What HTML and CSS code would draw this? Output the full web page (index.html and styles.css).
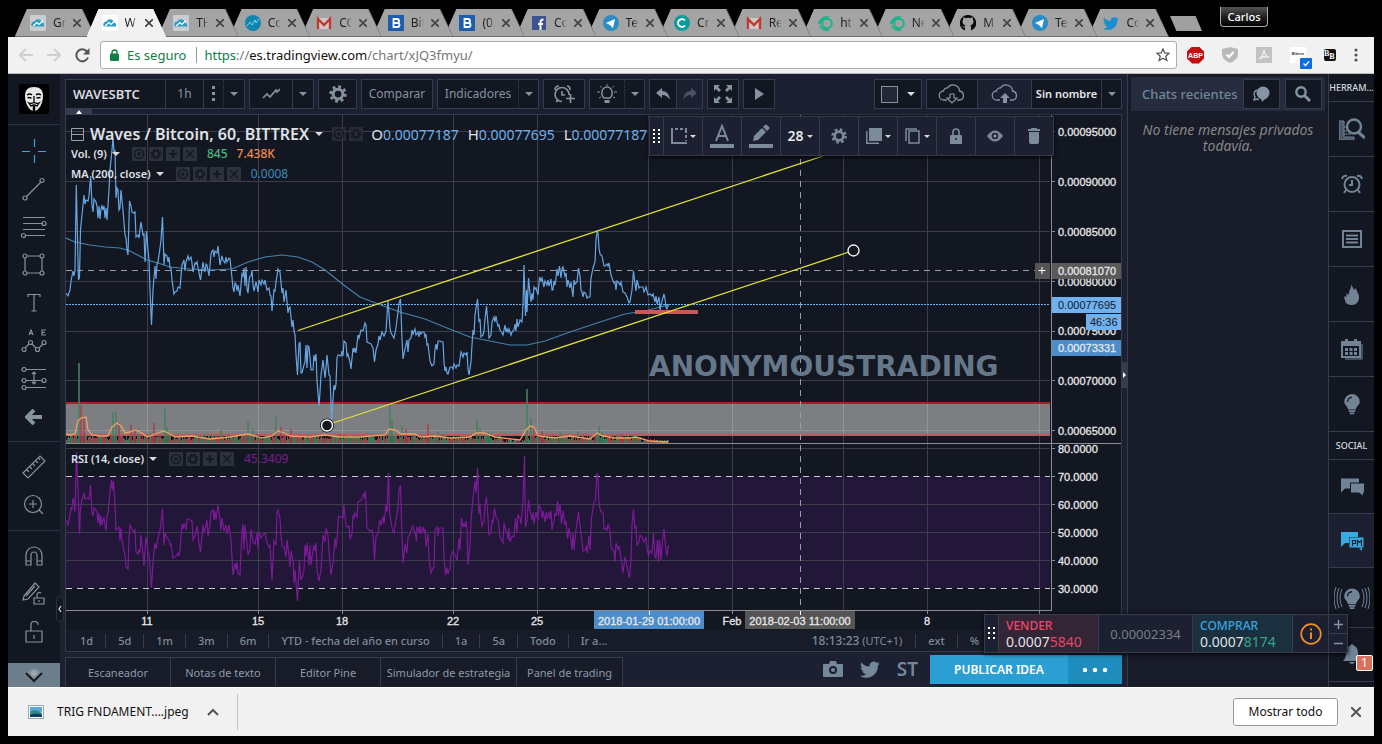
FILE: index.html
```html
<!DOCTYPE html>
<html lang="es">
<head>
<meta charset="utf-8">
<title>WAVESBTC - TradingView</title>
<link rel="stylesheet" href="styles.css">
</head>
<body>
<svg class="defs" aria-hidden="true">
  <symbol id="tv" viewBox="0 0 16 16"><rect width="16" height="16" rx="1" fill="currentColor"/><path d="M2 11.500h12a3 3 0 0 0-2-4 4 4 0 0 0-7.500-1 3 3 0 0 0-2.500 5z" fill="#2f9bc6"/><path d="M3 11l4-3.500 2 2 4-4" fill="none" stroke="#fff" stroke-width="1.200"/></symbol>
  <symbol id="cmc" viewBox="0 0 16 16"><circle cx="8" cy="8" r="8" fill="#0f85b0"/><path d="M2 11l3-4 2 3 3-5 1 3 3-4" fill="none" stroke="#7fd0ee"/></symbol>
  <symbol id="gmail" viewBox="0 0 16 16"><path d="M1 3h14v11H1z" fill="#d0c8c8"/><path d="M2 14V4l6 6 6-6v10" fill="none" stroke="#c03a30" stroke-width="2.400"/></symbol>
  <symbol id="btx" viewBox="0 0 16 16"><rect width="16" height="16" fill="#1c5dad"/><path d="M5.500 4h3.500a2 2 0 0 1 0 4h-3.500zM5.500 8h4a2 2 0 0 1 0 4h-4z" fill="none" stroke="#fff" stroke-width="1.800"/></symbol>
  <symbol id="fb" viewBox="0 0 16 16"><rect x="1" y="1" width="14" height="14" fill="#3b5490"/><path d="M9.500 15V7q0-2.500 3-2.500M7 9h5" fill="none" stroke="#fff" stroke-width="2"/></symbol>
  <symbol id="tg" viewBox="0 0 16 16"><circle cx="8" cy="8" r="8" fill="#2a8cc4"/><path d="M3 8l9-4-2 9-3-3z" fill="#fff"/></symbol>
  <symbol id="cc" viewBox="0 0 16 16"><circle cx="8" cy="8" r="8" fill="#0d9b9b"/><path d="M11 5.500a4 3.800 0 1 0 0 5" fill="none" stroke="#fff" stroke-width="1.800"/></symbol>
  <symbol id="st" viewBox="0 0 16 16"><path d="M1 7q4-7 12-6-3 1-3 3-5 0-7 6-2-1-2-3z" fill="#16b58a"/><path d="M3 11q3 5 9 4" fill="none" stroke="#16b58a" stroke-width="1.500"/><circle cx="10" cy="8.500" r="4.800" fill="none" stroke="#16b58a" stroke-width="2"/></symbol>
  <symbol id="gh" viewBox="0 0 16 16"><path d="M8 0a8 8 0 0 0-3 15.500v-3c-2 .4-2.500-1-3-1.700 1.300-.2 1.500 1.200 3 .7 0-.6.200-1 .5-1.200C3.500 10 2.500 8.500 2.500 6.500c0-1 .3-1.600.8-2.200 0-.6-.1-1.300.2-2 .8 0 1.500.4 2.200.9a8 8 0 0 1 4.600 0c.7-.5 1.400-.9 2.200-.9.3.7.2 1.400.2 2 .5.600.8 1.200.8 2.200 0 2-1 3.500-3 3.800.4.400.5.900.5 1.700v3.500A8 8 0 0 0 8 0z" fill="#0a0a0a"/></symbol>
  <symbol id="tw" viewBox="0 0 16 16"><path d="M16 3.500l-1.700.5.9-1.600-1.900.7A3.300 3.300 0 0 0 7.700 6 9 9 0 0 1 1.100 2.700a3.300 3.300 0 0 0 1 4.300L.7 6.600a3.300 3.300 0 0 0 2.600 3.200H1.800a3.300 3.300 0 0 0 3 2.300A6.500 6.500 0 0 1 0 13.500 9.300 9.300 0 0 0 14.300 5.200z" fill="currentColor"/></symbol>
  <symbol id="caret" viewBox="0 0 8 4"><path d="M0 0h8L4 4z" fill="currentColor"/></symbol>
  <symbol id="eye" viewBox="0 0 14 14"><rect width="14" height="14" fill="#2c313d"/><circle cx="7" cy="7" r="4.500" fill="none" stroke="#151922" stroke-width="1.600"/><circle cx="7" cy="7" r="1.700" fill="#151922"/></symbol>
  <symbol id="cog" viewBox="0 0 24 24"><circle cx="12" cy="12" r="6.500" fill="none" stroke="currentColor" stroke-width="4"/><circle cx="12" cy="12" r="9.800" fill="none" stroke="currentColor" stroke-width="3.600" stroke-dasharray="3.850 3.850"/></symbol>
  <symbol id="scog" viewBox="0 0 14 14"><rect width="14" height="14" fill="#2c313d"/><circle cx="7" cy="7" r="3.200" fill="none" stroke="#151922" stroke-width="2"/><circle cx="7" cy="7" r="4.800" fill="none" stroke="#151922" stroke-width="1.500" stroke-dasharray="1.880 1.880"/></symbol>
  <symbol id="plus" viewBox="0 0 14 14"><rect width="14" height="14" fill="#2c313d"/><path d="M7 3v8M3 7h8" stroke="#151922" stroke-width="2.200"/></symbol>
  <symbol id="x" viewBox="0 0 14 14"><rect width="14" height="14" fill="#2c313d"/><path d="M3 3l8 8M11 3l-8 8" stroke="#151922" stroke-width="1.600"/></symbol>
  <symbol id="clock" viewBox="0 0 22 20"><circle cx="11" cy="10.500" r="7.500" fill="none" stroke="currentColor" stroke-width="2"/><path d="M11 6v5H8M5 16l-2 3M17 16l2 3M1 5q1-4 5-3M21 5q-1-4-5-3" fill="none" stroke="currentColor" stroke-width="2"/></symbol>
  <symbol id="bulb" viewBox="0 0 16 20"><path d="M8 1a7 7 0 0 0-7 7c0 3 3 4 3.500 7h7C12 12 15 11 15 8a7 7 0 0 0-7-7z" fill="currentColor"/><path d="M4 8a4 4 0 0 1 4-4" fill="none" stroke="#131722" stroke-width="1.300"/><path d="M5 16.500h6M6 18.500h4" stroke="currentColor" stroke-width="1.500"/></symbol>
  <symbol id="cloud" viewBox="0 0 28 20"><path d="M9 16H6a4.500 4.500 0 0 1-.5-9 3.500 3.500 0 0 1 4-3A6.500 6.500 0 0 1 21.500 7 4.600 4.600 0 0 1 22 16h-3" fill="none" stroke="currentColor" stroke-width="1.300"/></symbol>
  <symbol id="chat" viewBox="0 0 24 18"><path d="M1 1h18v4h-9v6H5l-4 4z" fill="currentColor"/><path d="M11 6h13v9h-1v3l-4-3h-8z" fill="currentColor"/></symbol>
</svg>

<div class="tabs">
  <nav class="tablist" id="tablist"></nav>
  <button class="newtab" aria-label="Nueva pestaña"></button>
  <button class="user">Carlos</button>
</div>

<header class="omni">
  <button class="nav" aria-label="Atrás"><svg width="14" height="14"><path d="M14 7H1M7 1L1 7l6 6" fill="none" stroke="#d0d0d0" stroke-width="2"/></svg></button>
  <button class="nav" aria-label="Adelante"><svg width="14" height="14"><path d="M0 7h13M7 1l6 6-6 6" fill="none" stroke="#d0d0d0" stroke-width="2"/></svg></button>
  <button class="nav" aria-label="Recargar"><svg width="15" height="15"><path d="M13 9.500A6 6 0 1 1 12 3.500" fill="none" stroke="#555" stroke-width="2"/><path d="M14.500 0v6.500H8z" fill="#555"/></svg></button>
  <div class="url" role="textbox" aria-label="Dirección">
    <svg width="9" height="12"><path d="M2 5V3.500a2.500 2.500 0 0 1 5 0V5" fill="none" stroke="#0b8043" stroke-width="1.400"/><rect y="4.500" width="9" height="7.500" rx="1" fill="#0b8043"/></svg>
    <span class="secure">Es seguro</span>
    <span class="addr"><b>https</b><i>://</i>es.tradingview.com<i>/chart/xJQ3fmyu/</i></span>
    <svg class="star" width="14" height="14" viewBox="0 0 14 14"><path d="M7 1l1.800 4 4.200.4-3.200 2.900 1 4.200L7 10.300l-3.800 2.200 1-4.200L1 5.400 5.200 5z" fill="none" stroke="#555" stroke-width="1.300"/></svg>
  </div>
  <div class="ext">
    <span class="abp">ABP</span>
    <svg width="16" height="16" viewBox="0 0 16 16"><path d="M8 0l8 2v5q0 6-8 9-8-3-8-9V2z" fill="#b9b9b9"/><path d="M4.500 7.500L7 10l4.500-5" fill="none" stroke="#fff" stroke-width="2"/></svg>
    <svg width="16" height="16" viewBox="0 0 16 16"><rect width="16" height="16" fill="#c3c3c3"/><path d="M3 12q4-2 5-9 1 7 5 7-6-1-10 2z" fill="none" stroke="#f2f2f2" stroke-width="1.300"/></svg>
    <span class="bit">Bittrex<svg width="12" height="11"><rect width="12" height="11" rx="1" fill="#0b6ee0"/><path d="M3.500 5.500l2 2 3.500-4" fill="none" stroke="#fff" stroke-width="1.300"/></svg></span>
    <span class="bb"><b>B</b><b>B</b></span>
    <svg width="4" height="14" fill="#555"><circle cx="2" cy="2" r="1.600"/><circle cx="2" cy="7" r="1.600"/><circle cx="2" cy="12" r="1.600"/></svg>
  </div>
</header>

<main class="app">
  <aside class="tools">
    <svg class="mask" width="30" height="30" viewBox="0 0 30 30"><rect width="30" height="30" rx="2" fill="#000"/><path d="M15 3c6 0 9 3 9 9 0 7-4 15-9 15S6 19 6 12c0-6 3-9 9-9z" fill="#e8e8e8"/><path d="M8 11q3-2 5 0M17 11q2-2 5 0M8.500 13.500l4 .5M17.500 14l4-.5M15 12v6M10 19q2 1 5-.5 3 1.500 5 .5l-2 3q-3-2-6 0z" fill="none" stroke="#000" stroke-width="1.300"/><path d="M15 22v5" stroke="#000" stroke-width="2.500"/></svg>
    <div class="group g1">
      <button aria-label="Cruz"><svg class="cross" width="24" height="24"><path d="M12.500 0v8M12.500 16v8M0 12.500h8M16 12.500h8"/></svg></button>
      <button aria-label="Línea de tendencia"><svg width="24" height="24"><path d="M4 20L19 5"/><circle cx="3" cy="21" r="2"/><circle cx="20" cy="3.500" r="2"/></svg></button>
      <button aria-label="Fibonacci"><svg width="26" height="24"><path d="M2 2.500h22M2 8.500h20M2 14.500h22M4 20.500h20"/><circle cx="23" cy="8.500" r="2"/><circle cx="2.500" cy="20.500" r="2"/></svg></button>
      <button aria-label="Rectángulo"><svg width="24" height="24"><path d="M5 3h13M5 20h13M3 5v13M20 5v13"/><circle cx="3" cy="3" r="2"/><circle cx="20" cy="3" r="2"/><circle cx="3" cy="20" r="2"/><circle cx="20" cy="20" r="2"/></svg></button>
      <button aria-label="Texto"><svg width="16" height="20"><path d="M2 4V1.500h12V4M8 2v16M5.500 18h5"/></svg></button>
      <button aria-label="Patrón"><svg width="26" height="24"><path d="M4 19l4-4M11 15l4 4M18 19l4-4M8 6l2-5 2 5M8.500 4.500h3M25 1h-4v5h4M21 3.500h3"/><circle cx="3" cy="20.500" r="2"/><circle cx="9.500" cy="13.500" r="2"/><circle cx="16.500" cy="20.500" r="2"/><circle cx="23" cy="13.500" r="2"/></svg></button>
      <button aria-label="Predicción"><svg width="26" height="24"><path d="M5 2.500h20M5 13.500h16M5 20.500h20M13 5v12M11 7l2-2 2 2M11 15l2 2 2-2"/><circle cx="3" cy="2.500" r="2"/><circle cx="3" cy="13.500" r="2"/><circle cx="23" cy="13.500" r="2"/><circle cx="3" cy="20.500" r="2"/></svg></button>
      <button aria-label="Atrás"><svg class="bold" width="18" height="16"><path d="M17 8H3M9 1L2 8l7 7"/></svg></button>
    </div>
    <div class="group g2">
      <button aria-label="Medir"><svg width="24" height="24"><path d="M1 18L18 1l5 5L6 23zM5 15l2 2M8 12l2 2M11 9l2 2M14 6l2 2M17 3l1 2"/></svg></button>
      <button aria-label="Ampliar"><svg width="22" height="22"><circle cx="10" cy="10" r="8.500"/><path d="M10 6v8M6 10h8M16 16l4 4"/></svg></button>
    </div>
    <div class="group g3">
      <button aria-label="Imán"><svg width="18" height="20"><path d="M1 19V9a8 8 0 0 1 16 0v10h-5V9a3 3 0 0 0-6 0v10zM1 15h5M12 15h5"/></svg></button>
      <button aria-label="Bloquear dibujo"><svg width="24" height="24"><path d="M2 14L13 1l4 4L6 17l-5 1zM4 14l9-10M12 16h10v6H12zM15 16v-3a2.500 2.500 0 0 1 4-2M17 18v2"/></svg></button>
      <button aria-label="Bloquear"><svg width="18" height="22"><path d="M1 10h16v11H1zM6 10V4a3.500 3.500 0 0 1 7 0M9 14v4"/></svg></button>
    </div>
    <button class="more" aria-label="Más"><svg width="20" height="16"><path d="M2 6q8-9 16 0l-8 7z" stroke="none" fill="#7f8d99"/><circle cx="10" cy="6" r="3" stroke="none" fill="#9aa6b0"/><path class="chev" d="M2 6l8 8 8-8"/></svg></button>
    <button class="handle" aria-label="Contraer"><svg width="4" height="8"><path d="M3 1L1 4l2 3"/></svg></button>
  </aside>

  <section class="center">
    <div class="bar">
      <div class="btns"><input class="symbol" aria-label="Símbolo" value="WAVESBTC"><button class="w38">1h</button><button class="w20"><svg width="4" height="16"><path d="M0 0h3v3H0zM0 6h3v3H0zM0 12h3v3H0z" fill="currentColor"/></svg></button><button class="w21 dot"><svg width="8" height="4"><use href="#caret"/></svg></button></div>
      <div class="btns"><button class="w42"><svg width="18" height="12"><path d="M1 10l4-4 3 3 6-7 1 2 3-3" fill="none" stroke="currentColor" stroke-width="1.700"/></svg></button><button class="w21"><svg width="8" height="4"><use href="#caret"/></svg></button></div>
      <div class="btns"><button class="w37"><svg width="18" height="18"><use href="#cog"/></svg></button></div>
      <div class="btns"><button class="w70">Comparar</button></div>
      <div class="btns"><button class="w80">Indicadores</button><button class="w20 dot"><svg width="8" height="4"><use href="#caret"/></svg></button></div>
      <div class="btns"><button class="w40"><svg width="22" height="20" viewBox="0 0 22 20"><path d="M9 17.500A7 7 0 1 1 16 11M9 7v4h3M2 6q0-4 4-4M14 2q3 0 3 4M5 16l-2 2M13 14.500h9M17.500 10v9" fill="none" stroke="currentColor" stroke-width="1.700"/></svg></button></div>
      <div class="btns"><button class="w34"><svg width="20" height="20" viewBox="0 0 20 20"><path d="M7 14q-3-3-2-6a5 5 0 0 1 10 0q1 3-2 6z" fill="none" stroke="currentColor" stroke-width="1.400"/><path d="M7.500 16h5v3h-5z" fill="currentColor"/><path d="M10 0v2M3 2l1.500 1.500M17 2l-1.500 1.500M0 8h3M17 8h3M2 14l2-1M18 14l-2-1" stroke="currentColor"/></svg></button><button class="w20 dot"><svg width="8" height="4"><use href="#caret"/></svg></button></div>
      <div class="btns"><button class="w26"><svg width="14" height="12"><path d="M0 5l6-5v3q7 0 8 9-3-5-8-5v3z" fill="currentColor"/></svg></button><button class="w26 off"><svg width="14" height="12"><path d="M14 5L8 0v3Q1 3 0 12q3-5 8-5v3z" fill="currentColor"/></svg></button></div>
      <div class="btns"><button class="w30"><svg width="18" height="18"><path d="M0 0h6L4 2l3 3-2 2-3-3-2 2zM18 0h-6l2 2-3 3 2 2 3-3 2 2zM18 18h-6l2-2-3-3 2-2 3 3 2-2zM0 18h6l-2-2 3-3-2-2-3 3-2-2z" fill="currentColor"/></svg></button></div>
      <div class="btns"><button class="w30"><svg width="9" height="12"><path d="M0 0l9 6-9 6z" fill="currentColor"/></svg></button></div>
      <div class="btns right"><button class="w46"><svg width="17" height="17"><rect x=".5" y=".5" width="16" height="16" fill="#232835" stroke="currentColor"/></svg><svg class="lite" width="8" height="4"><use href="#caret"/></svg></button></div>
      <div class="btns gap"><button class="w50"><svg width="28" height="20" viewBox="0 0 28 20"><use href="#cloud"/><path d="M12 10h4v4h3l-5 5-5-5h3z" fill="none" stroke="currentColor" stroke-width="1.200"/></svg></button><button class="w54 hi"><svg width="28" height="20" viewBox="0 0 28 20"><use href="#cloud"/><path d="M12 19h4v-5h3l-5-5-5 5h3z" fill="currentColor"/></svg></button><button class="w70 name">Sin nombre</button><button class="w20"><svg width="8" height="4"><use href="#caret"/></svg></button></div>
      <span class="tri" aria-hidden="true"><svg width="6" height="4"><path d="M0 4l3-4 3 4z" fill="#fff"/></svg></span>
    </div>

    <div class="chartbox">
      <svg class="chart" viewBox="66 115 1055 515" role="img" aria-label="Waves / Bitcoin">
        <g id="grid" shape-rendering="crispEdges">
          <rect x="66" y="476" width="984" height="112" fill="#221639"/>
          <path d="M66 131.500H1050M66 181.500H1050M66 231.500H1050M66 281.500H1050M66 331.500H1050M66 380.500H1050M66 430.500H1050M66 448.500H1050M66 504.500H1050M66 532.500H1050M66 560.500H1050M147.500 115V610M258.500 115V610M342.500 115V610M453.500 115V610M537.500 115V610M648.500 115V610M732.500 115V610M843.500 115V610M927.500 115V610M1039.500 115V610" stroke="#3b3d4b"/>
          <rect x="66" y="404" width="984" height="32" fill="#7d7e81"/>
          <path d="M147.500 404V435M258.500 404V435M342.500 404V435M453.500 404V435M537.500 404V435M648.500 404V435M732.500 404V435M843.500 404V435M927.500 404V435M1039.500 404V435M66 430.500H1050" stroke="#929396"/>
          <rect x="66" y="402" width="984" height="2" fill="#a8202a"/>
          <rect x="66" y="434" width="984" height="2" fill="#bb5a5c"/>
        </g>
        <g id="bars" shape-rendering="crispEdges"></g>
        <polyline fill="none" stroke="#f0a060" stroke-width="1.300" points="66,434 70,435 75,434 78,421 81,418 86,417 88,430 92,435 100,436 108,436 112,427 117,423 121,426 125,433 130,432 135,430 142,433 147,437 158,433 164,431 170,434 175,437 192,436 210,439 230,437 248,434 262,438 272,436 278,431 284,433 290,436 310,437 325,435 340,437 360,437 385,435 389,429 395,430 401,434 415,434 420,437 435,436 450,438 470,437 476,433 484,433 495,437 520,440 526,430 530,426 534,427 538,436 555,438 570,436 590,439 597,433 603,436 615,438 630,438 636,437 650,441 668,442"/>
        <path d="M66 476.500H1050M66 588.500H1050" stroke="#c9c6d0" stroke-dasharray="6 5" shape-rendering="crispEdges"/>
        <path d="M66 304.500H1050" stroke="#72b2f0" stroke-dasharray="2 1" shape-rendering="crispEdges"/>
        <path d="M66 270.500H1050M800.500 115V610" stroke="#9a9ca3" stroke-dasharray="6 5" shape-rendering="crispEdges"/>
        <polyline fill="none" stroke="#4383ab" stroke-width="1.200" points="66,238 75,242 90,245 105,247 120,248 130,251 147,260 158,263 170,267 190,269 210,270 232,269 248,262 265,257 282,255 298,257 312,262 325,270 345,286 360,297 378,304 400,312 425,319 447,328 470,337 490,341 510,345 527,345 545,341 570,332 600,322 625,314 645,311 668,305"/>
        <polyline fill="none" stroke="#68a6e2" stroke-width="1.200" points="66,293 68,296 70,290 71,281 73,271 74,276 75,270 76.300,185 78,262 78.500,280 79.500,277 80.500,230 82,215 84,195 85,204 86,200 88,201 89,196 90.700,176 92,205 93,212 94,199 96,202 97,206 98,218 99,206 100,219 101,209 102,206 103,210 104,206 105,218 106,208 107,220 109,190 110,170 112,150 113,138 114,152 115,150 116,198 117,188 118,190 119,210 120,208 121,190 123,210 125,235 126,238 127,250 128,255 129.500,201 131,206 132,212 134,213 135,212 136,237 138,235 139,238 140,229 141,222 143,235 144,234 145,262 146.500,231 148,250 149,260 150,290 151.500,325 153,290 155,266 156,279 157,264 158,262 160,248 161,240 162.500,217 164,265 165,254 167,256 168,262 169,257 170,268 171,268 172,280 174,294 175,292 177,291 178,287 180,288 182,265 184,260 185,271 186,262 188,256 189,260 191,257 192,263 193,272 195,263 196,264 197,262 199,273 200.500,280 202,269 203,262 204,268 205,272 206,264 207,265 209,276 211,254 212,251 213,250 214,257 215,251 217,253 218,246 220,265 222,256 223,260 225,263 226,257 227,262 229,258 230,259 231,268 233,288 234,292 235,283 236,284 237,291 238,285 240,296 242,274 243,276 244,268 245,286 246,267 247,289 248,293 249.500,277 251,276 252,270 253,285 254,291 256,282 257,286 258,292 259,280 261,285 262,280 264,284 265,280 267,290 269,288 270,295 271,296 272,311 274,290 275,291 276,282 278,269 279,271 280,272 282,293 283,288 284,302 286,290 288,313 289,308 290,307 292,327 293,320 294,331 295,335 296,355 297.500,375 299,344 300,342 301,373 302,373 304,365 305,362 306,345 307,368 308,346 309,347 310,358 311,370 313,370 314,355 315,361 316,354 317,380 319,406 320,392 321,375 323,360 325,378 326,368 327,355 329,375 330,376 331,404 331.500,420 334,385 335,390 336,384 337,358 338,355 339,355 341,356 342,351 343,356 344,341 346,343 347,356 348,354 349,358 350,362 351,369 353,348 354,352 355,348 356,353 358,335 359,338 361,330 363,331 365,323 366,325 367,342 369,343 371,344 373,348 374.500,362 376,350 378,344 379,336 380,340 381,336 382,332 384,336 386,331 388,300 390,328 391,333 394,338 396,328 398,312 399,303 400.500,299 402,338 403,359 405,349 407,340 408,352 409,340 411,338 412,330 413,334 415,329 416,335 418,332 419,337 420,332 421,334 422,332 424,332 425,337 426,334 427,345 428,344 430,361 432,366 434,364 435,349 436,344 437,350 438,341 440,341 442,342 443,342 444,362 445,371 446,367 447,373 448,374 450,367 452,367 453,369 454,364 456,368 457,365 459,366 461,352 463,357 464,353 466,355 467,352 468,369 469,375 471,362 472,345 473,330 474,335 475,315 477.500,299 479,322 480,319 481,337 483,335 484,331 485,319 486.500,306 488,324 489,338 491,335 492,322 494,317 495,322 496,316 497,322 498,326 499,325 500,330 502,333 503,335 505,325 506,332 507,329 508,332 509,329 511,335 512,332 514,330 515,324 516,331 517,319 518,327 520,320 522,322 523,305 524,265 525.500,316 526.500,290 527,312 528.500,278 530,294 531,302 532,293 533,300 534,287 535,289 536,288 538,295 539.500,277 541,281 542,278 544,287 545,281 547,285 548,280 549,286 551,279 552,290 553,290 554,281 555,285 556,278 557,269 558,276 559.500,266 561,278 562,269 563,267 565,276 566,273 567,287 568,280 570,288 571,282 573,297 574,280 575,284 577,282 578.500,268 580,276 581,290 582,292 583,297 584,292 586,294 587,298 588,297 590,297 591,278 593,268 595,262 596,240 597,231.500 598,233 599,248 600,254 602,256 604,266 605,266 607,264 608,266 609,263 611,275 612,278 614,283 615,282 616,290 617,281 619,283 620,285 621,282 623,292 625,293 627,297 629,303 630,302 632,290 633.500,271 635,284 636,291 637,280 639,288 640,287 642,287 643,287 644,292 645,290 646,287 648,295 650,294 652,296 653,294 655,302 656,296 657,304 659,297 660,310 662,301 664,294 665,299 666,307 667,309 668.500,304"/>
        <path d="M635 312H698" stroke="#c75a57" stroke-width="4"/>
        <path d="M298 330.500L823 156M330 424L849 252" stroke="#e2e236" stroke-width="1.300" fill="none"/>
        <circle cx="327" cy="425.500" r="7" fill="#111"/><circle cx="327" cy="425.500" r="5.500" fill="#131722" stroke="#fff" stroke-width="1.400"/>
        <circle cx="853.500" cy="250.500" r="5.500" fill="#131722" stroke="#fff" stroke-width="1.300"/>
        <text class="mark" x="649" y="376">ANONYMOUSTRADING</text>
        <polyline fill="none" stroke="#7c1b96" stroke-width="1.200" points="66,520 68,525 70,515 71,508 72,509 73,498 74,502 75,512 76.500,452 78,490 79.500,534 80.500,508 82,500 84,493 85,499 87,498 89,499 90.500,485 92,513 93,516 94,508 96,510 97,513 98,523 99,513 100,526 101,516 102,525 103,520 104,518 105,525 106,531 107,516 108,513 110,492 111.500,480 112.500,490 113.500,481 115,505 116,530 118,528 119,527 120,541 121,528 122,540 124,551 125,555 126,567 128,569 129,536 130,525 132,529 134,532 135,530 136,552 138,554 139,550 140,552 141,535 143,553 144,566 146,537 147,544 148,553 149,555 151.500,588 153,562 154,552 155,543 156,549 158,538 160,530 162.500,509 164,545 165,533 167,538 169,540 170,545 171,544 173,558 176,556 178,553 179,556 180,550 182,524 183,529 184,523 186,530 187,520 188,519 190,520 192,521 193,540 195,536 197,526 199,543 200.500,552 202,536 203,525 204,533 206,525 207,520 208,536 210,525 211,512 213,510 214,520 215,511 216,520 218,505 220,520 221,530 222,518 224,531 226,525 227,534 229,525 231,540 233,575 235,563 236,570 237,562 238,573 240,575 242,530 243,524 244,550 245,525 247,543 248,555 250,549 251,529 253,542 255,544 257,533 258,549 259,532 261,538 264,534 265,533 267,543 269,547 270,545 272,580 274,541 276,545 277,512 278,510 280,518 281,535 282,546 284,547 286,557 287,540 289,556 290,567 291,551 293,560 294,583 295,570 297.500,601 299.500,560 301,580 303,575 304,570 305,545 306,556 307,543 309,565 310,545 311,565 313,550 314,545 315,551 316,543 317,570 319,581 321,570 323,535 325,542 326,528 328,535 329,551 331,575 333,563 335,538 336,548 337,539 338.500,516 341,517 343,518 344,505 346,526 348,527 349,526 350,539 352,534 353,515 354,519 355,513 357,517 358,502 360,501 362,499 364,493 365,499 365.500,491 367,528 370,531 372,530 373,534 374.500,560 376,536 378,534 379,525 380,520 381,525 383,516 384,524 386,505 387,512 388.500,473 389.500,512 391,522 393,532 394,533 396,520 398,508 399,490 400.500,485 401.500,520 403,563 404,556 405,544 407,553 408,537 410,534 412,527 413,526 414,531 415,532 416.500,541 417,527 419,532 420,526 421,534 423,527 424,532 425,529 426,547 428,534 429,559 431,573 433,568 434,568 435,530 437,527 438,536 439,528 443,528 444,556 445.500,575 447,568 448,574 450,568 451,556 453,551 454,553 456,557 457,560 459,538 460,550 461.500,518 463,527 464,524 465,527 466,521 467,530 468,565 470,545 471,520 473,498 474,490 475,481 476,493 477.500,468 479,514 480,505 481,519 482,526 484,521 485,506 486.500,497 488,518 489,535 491,532 492,520 493,523 494.500,508 496,517 498,520 499,527 500,537 502,541 503,543 504,523 506,531 507,532 508,540 509,528 510,542 512,536 514,537 515.500,518 517,533 518,515 520,518 521,524 523,500 524.500,456 525.500,527 527,521 528.500,500 530,510 532,520 533,512 534,524 536,512 538,521 539,505 541,510 542,518 543,511 545,522 546,512 547,519 549,512 550,519 551,511 552,530 554,520 555,513 556,516 557.500,501 558.500,516 560,504 561.500,524 563,511 565,525 566,521 567.500,539 569,528 571,541 572,550 573,533 574,550 576,530 578.500,512 580,525 582,542 583,551 585,550 586.500,547 587,553 589,536 590,550 591.500,518 594,502 595.500,500 597,473 598,476 599,505 601,512 603,512 604,529 606,528 607,530 608,524 610,530 611,547 613,550 614,551 615,562 616,543 618,549 619,546 621,558 623,573 625,557 627,566 629.500,578 631,560 632,525 633.500,509 635,529 636,526 637,545 639,542 640,535 642,537 644,542 646,537 647,548 648.500,556 650,551 652,553 653.500,533 655,557 656,558 657.500,540 658.500,562 659.500,540 661,560 662.500,541 664,529 666,550 667,556 668.500,545"/>
        <g shape-rendering="crispEdges" stroke="#8b8d92"><path d="M66 443.500H1121M66 610.500H1051M1051.500 115V611"/><path d="M1052 131.500h3M1052 181.500h3M1052 231.500h3M1052 281.500h3M1052 331.500h3M1052 380.500h3M1052 430.500h3M1052 448.500h3M1052 476.500h3M1052 504.500h3M1052 532.500h3M1052 560.500h3M1052 588.500h3M147.500 611v3M258.500 611v3M342.500 611v3M453.500 611v3M537.500 611v3M732.500 611v3M927.500 611v3M1039.500 611v3"/></g>
        <g class="axis">
          <text x="1058" y="136">0.00095000</text><text x="1058" y="186">0.00090000</text><text x="1058" y="236">0.00085000</text><text x="1058" y="286">0.00080000</text><text x="1058" y="335">0.00075000</text><text x="1058" y="385">0.00070000</text><text x="1058" y="435">0.00065000</text>
          <text x="1058" y="453">80.0000</text><text x="1058" y="481">70.0000</text><text x="1058" y="509">60.0000</text><text x="1058" y="537">50.0000</text><text x="1058" y="565">40.0000</text><text x="1058" y="593">30.0000</text>
          <rect x="1035" y="263" width="15" height="16" fill="#555"/><path d="M1038.500 270.500h7M1042 267v7" stroke="#fff"/>
          <rect x="1052" y="263" width="69" height="16" fill="#5a5a5a"/><text x="1058" y="275">0.00081070</text>
          <rect x="1052" y="297" width="69" height="16" fill="#70b1f0"/><text class="dk" x="1058" y="309">0.00077695</text>
          <rect x="1086" y="314" width="35" height="16" fill="#70b1f0"/><text class="dk" x="1090" y="326">46:36</text>
          <rect x="1052" y="340" width="69" height="16" fill="#4b8dcb"/><text x="1058" y="352">0.00073331</text>
          <g text-anchor="middle"><text x="147" y="625">11</text><text x="258" y="625">15</text><text x="342" y="625">18</text><text x="453" y="625">22</text><text x="537" y="625">25</text><text x="732" y="625">Feb</text><text x="927" y="625">8</text>
          <rect x="594" y="611" width="110" height="18" fill="#4b8dcb"/><text x="649" y="625">2018-01-29 01:00:00</text>
          <rect x="745" y="611" width="110" height="18" fill="#555"/><text x="800" y="625">2018-02-03 11:00:00</text></g>
          <path d="M649.500 611v4M800.500 611v4" stroke="#fff"/>
        </g>
      </svg>

      <div class="legend">
        <div class="row big"><svg width="13" height="13"><path d="M.5.5h12v12H.5zM1 6.500h11" fill="none" stroke="#9aa0aa"/></svg><span class="title">Waves / Bitcoin, 60, BITTREX</span><svg class="lite" width="8" height="4"><use href="#caret"/></svg><span class="ic"><svg width="14" height="14"><use href="#eye"/></svg><svg width="14" height="14"><use href="#scog"/></svg></span><span class="ohlc">O<b>0.00077187</b></span><span class="ohlc">H<b>0.00077695</b></span><span class="ohlc">L<b>0.00077187</b></span></div>
        <div class="row"><span>Vol. (9)</span><svg class="lite" width="8" height="4"><use href="#caret"/></svg><span class="ic"><svg width="14" height="14"><use href="#eye"/></svg><svg width="14" height="14"><use href="#scog"/></svg><svg width="14" height="14"><use href="#plus"/></svg><svg width="14" height="14"><use href="#x"/></svg></span><span class="green">845</span><span class="orange">7.438K</span></div>
        <div class="row"><span>MA (200, close)</span><svg class="lite" width="8" height="4"><use href="#caret"/></svg><span class="ic"><svg width="14" height="14"><use href="#eye"/></svg><svg width="14" height="14"><use href="#scog"/></svg><svg width="14" height="14"><use href="#plus"/></svg><svg width="14" height="14"><use href="#x"/></svg></span><span class="blue">0.0008</span></div>
      </div>
      <div class="legend rsi"><div class="row"><span>RSI (14, close)</span><svg class="lite" width="8" height="4"><use href="#caret"/></svg><span class="ic"><svg width="14" height="14"><use href="#eye"/></svg><svg width="14" height="14"><use href="#scog"/></svg><svg width="14" height="14"><use href="#plus"/></svg><svg width="14" height="14"><use href="#x"/></svg></span><span class="purple">45.3409</span></div></div>

      <div class="draw">
        <span class="grip"><svg width="7" height="14"><path d="M0 0h2v2H0zM5 0h2v2H5zM0 4h2v2H0zM5 4h2v2H5zM0 8h2v2H0zM5 8h2v2H5zM0 12h2v2H0zM5 12h2v2H5z" fill="#fff"/></svg></span>
        <button><svg width="16" height="16"><path d="M1 0v15h15" fill="none" stroke="currentColor" stroke-width="2"/><path d="M4 1h12M15 2v11" stroke="currentColor" stroke-width="2" stroke-dasharray="3 2"/></svg><svg class="lite" width="6" height="3"><use href="#caret"/></svg></button>
        <button><svg width="24" height="24"><path d="M6 17L12 2l6 15M8 12h8" fill="none" stroke="currentColor" stroke-width="2"/><path d="M0 20h24v4H0z" fill="currentColor"/></svg></button>
        <button><svg width="24" height="24"><path d="M4 17l1-5 8-8 4 4-8 8zM14 3l2-2q1-1 2 0l2 2q1 1 0 2l-2 2zM0 20h24v4H0z" fill="currentColor"/></svg></button>
        <button class="num">28<svg class="lite" width="6" height="3"><use href="#caret"/></svg></button>
        <button><svg width="16" height="16"><use href="#cog"/></svg></button>
        <button><svg width="16" height="16"><path d="M3 0h13v13H3z" fill="currentColor"/><path d="M.8 3v12.200H13" fill="none" stroke="currentColor" stroke-width="1.500"/></svg><svg class="lite" width="6" height="3"><use href="#caret"/></svg></button>
        <button><svg width="16" height="16"><path d="M4 3h10v12H4zM1 13V1h11" fill="none" stroke="currentColor" stroke-width="1.500"/></svg><svg class="lite" width="6" height="3"><use href="#caret"/></svg></button>
        <button><svg width="12" height="16"><path d="M3 8V4a3 3 0 0 1 6 0v4" fill="none" stroke="currentColor" stroke-width="1.700"/><rect y="7" width="12" height="9" rx="1" fill="currentColor"/><circle cx="6" cy="11" r="1" fill="#1d2030"/></svg></button>
        <button><svg width="16" height="12"><path d="M0 6q8-11 16 0-8 11-16 0z" fill="currentColor"/><circle cx="8" cy="6" r="3.300" fill="#1d2030"/><circle cx="8" cy="6" r="1.800" fill="currentColor"/></svg></button>
        <button><svg width="12" height="16"><path d="M0 1h3V0h6v1h3v2H0zM1 4h10v10q0 2-2 2H3q-2 0-2-2z" fill="currentColor"/></svg></button>
      </div>

      <div class="ranges">
        <button>1d</button><button>5d</button><button>1m</button><button>3m</button><button>6m</button><button>YTD - fecha del año en curso</button><button>1a</button><button>5a</button><button>Todo</button><button>Ir a...</button>
        <span class="time"><b>18:13:23</b> (UTC+1)</span><button>ext</button><button>%</button>
      </div>
    </div>

    <div class="bottom">
      <div class="panels"><button>Escaneador</button><button>Notas de texto</button><button>Editor Pine</button><button class="wide">Simulador de estrategia</button><button>Panel de trading</button></div>
      <div class="share">
        <button aria-label="Captura"><svg width="20" height="16"><path d="M1 3h5l1-3h6l1 3h5q1 0 1 1v11q0 1-1 1H1q-1 0-1-1V4q0-1 1-1z" fill="currentColor"/><circle cx="10" cy="9" r="4" fill="#1c2030"/><circle cx="10" cy="9" r="2" fill="currentColor"/></svg></button>
        <button aria-label="Twitter"><svg width="20" height="20"><use href="#tw"/></svg></button>
        <button class="stk">ST</button>
      </div>
      <div class="publish"><button>PUBLICAR IDEA</button><button class="dots" aria-label="Más opciones"><svg width="26" height="6" fill="#fff"><circle cx="3" cy="3" r="2.200"/><circle cx="13" cy="3" r="2.200"/><circle cx="23" cy="3" r="2.200"/></svg></button></div>
    </div>
    <button class="fold" aria-label="Plegar panel"><svg width="3" height="6"><path d="M0 0l3 3-3 3z" fill="#fff"/></svg></button>
  </section>

  <section class="chats">
    <div class="chead"><h2>Chats recientes</h2><button aria-label="Nuevo chat"><svg width="18" height="16"><path d="M5 4a4.500 4.500 0 0 0-2 7l-1 3 3-1 2 .5" fill="none" stroke="currentColor" stroke-width="1.400"/><circle cx="11" cy="7" r="6.500" fill="currentColor"/><path d="M9 12l1 4 4-4z" fill="currentColor"/></svg></button><button aria-label="Buscar"><svg width="16" height="16"><circle cx="6" cy="6" r="4.700" fill="none" stroke="currentColor" stroke-width="2.400"/><path d="M9.500 9.500l5.500 5.500" stroke="currentColor" stroke-width="3"/></svg></button></div>
    <p>No tiene mensajes privados todavía.</p>
  </section>

  <aside class="widgets">
    <h3>HERRAM...</h3>
    <button class="c1" aria-label="Lista"><svg width="26" height="22"><circle cx="15" cy="8.500" r="7" fill="none" stroke="currentColor" stroke-width="2.500"/><path d="M19 14l7 6" stroke="currentColor" stroke-width="3"/><path d="M0 3h5v16h10v3H0zM5 9h2M5 13h3M5 16h7" stroke="currentColor" fill="currentColor" fill-opacity=".6"/></svg></button>
    <button class="c1" aria-label="Alertas"><svg width="22" height="22"><use href="#clock"/></svg></button>
    <button class="c1" aria-label="Datos"><svg width="20" height="18"><path d="M1 1h18v16H1zM4 5.500h12M4 9h12M4 12.500h12" fill="none" stroke="currentColor" stroke-width="2"/></svg></button>
    <button class="c1" aria-label="Popular"><svg width="16" height="22"><path d="M7 0c0 3 2 4 3 7l2-2c0 3 3 5 3 9 0 5-3 8-7 8s-7-2-7-5c-1-2-1-3 0-4l2 1-1-4 3 2C4 8 8 6 7 0z" fill="currentColor"/></svg></button>
    <button class="c1" aria-label="Calendario"><svg width="22" height="21"><path d="M1 3h18v15H1z" fill="none" stroke="currentColor" stroke-width="2"/><path d="M21 5v15H4" fill="none" stroke="currentColor"/><path d="M1 3h18v4H1zM4 0h3v3H4zM13 0h3v3h-3zM4 9h3v3H4zM8.500 9h3v3h-3zM13 9h3v3h-3zM4 13h3v3H4zM8.500 13h3v3h-3zM13 13h3v3h-3z" fill="currentColor"/></svg></button>
    <button class="c1" aria-label="Ideas"><svg width="18" height="22"><use href="#bulb"/></svg></button>
    <h3>SOCIAL</h3>
    <button class="c3" aria-label="Chat público"><svg width="24" height="19"><use href="#chat"/></svg></button>
    <button class="c3 on" aria-label="Mensajes privados"><svg width="24" height="20"><path d="M1 1h17v5H9v6H5l-4 4z" fill="currentColor"/><path d="M9.500 6.500h14v10h-14zM22 17v3l-3-3" fill="currentColor"/><path d="M12.500 15V9.500h3v3h-3M17.500 15V9.500l2 2 2-2V15" fill="none" stroke="#1c2030" stroke-width="1.200"/></svg></button>
    <button class="c2" aria-label="Transmisión de ideas"><svg width="36" height="26"><g transform="translate(9 2)"><use href="#bulb" width="18" height="23"/></g><path d="M8 4q-4 9 0 18M5 3q-4 10 0 20M2 2q-4 11 0 22M28 4q4 9 0 18M31 3q4 10 0 20M34 2q4 11 0 22" fill="none" stroke="currentColor"/></svg></button>
    <button class="c3" aria-label="Notificaciones"><svg width="18" height="22"><path d="M9 0q1 0 1.500 1.500Q15 3 15 9q0 5 3 8H0q3-3 3-8 0-6 4.500-7.500Q8 0 9 0zM6 18h6q-3 4-6 0z" fill="currentColor"/></svg><span class="badge">1</span></button>
  </aside>

  <div class="trade">
    <span class="grip"><svg width="7" height="14"><path d="M0 0h2v2H0zM5 0h2v2H5zM0 5h2v2H0zM5 5h2v2H5zM0 10h2v2H0zM5 10h2v2H5z" fill="#fff"/></svg></span>
    <button class="sell"><strong>VENDER</strong><span>0.0007<em>5840</em></span></button>
    <span class="spread">0.00002334</span>
    <button class="buy"><strong>COMPRAR</strong><span>0.0007<em>8174</em></span></button>
    <button class="info" aria-label="Información"><svg width="22" height="22"><circle cx="11" cy="11" r="9.800" fill="none" stroke="#ee8f24" stroke-width="1.700"/><path d="M11 9.500V16M11 5.500v2" stroke="#ee8f24" stroke-width="2"/></svg></button>
    <span class="pm"><button aria-label="Más"><svg width="9" height="9"><path d="M4.500 0v9M0 4.500h9" stroke="#8794a3" stroke-width="1.500"/></svg></button><button aria-label="Menos"><svg width="9" height="9"><path d="M0 4.500h9" stroke="#8794a3" stroke-width="1.500"/></svg></button></span>
  </div>
</main>

<footer class="shelf">
  <button class="file"><svg width="16" height="14"><rect x=".5" y=".5" width="15" height="13" fill="#fff" stroke="#9aa7b0"/><path d="M2 2h12v5H2z" fill="#58a8dc"/><path d="M2 7q5-4 12 1v4H2z" fill="#2d8a80"/><path d="M2 10q6-3 12 0v2H2z" fill="#123d66"/></svg><span>TRIG FNDAMENT....jpeg</span><svg width="12" height="8"><path d="M1 7l5-5 5 5" fill="none" stroke="#555" stroke-width="2"/></svg></button>
  <span class="line"></span>
  <button class="all">Mostrar todo</button>
  <button class="close" aria-label="Cerrar"><svg width="10" height="10"><path d="M0 0l10 10M10 0L0 10" stroke="#555" stroke-width="2"/></svg></button>
</footer>
<script src="app.js"></script>
</body>
</html>
```
FILE: styles.css
```css
* { box-sizing: border-box; }
html { height: 100%; }
body { margin: 0; min-height: 100%; height: 100vh; background: #000; display: flex; flex-direction: column; padding: 9px 8px 8px; font: 12px/16px "Noto Sans", "Open Sans", sans-serif; color: #d8dade; }
button, input { font: inherit; color: inherit; background: none; border: 0; padding: 0; margin: 0; }
button { display: flex; align-items: center; justify-content: center; white-space: nowrap; }
svg { display: block; flex: none; }
.defs { position: absolute; width: 0; height: 0; }
h2, h3, p { margin: 0; font-weight: 400; }

.tabs { height: 28px; flex: none; display: flex; align-items: flex-start; padding-left: 7px; }
.tablist { display: flex; flex: 0 1 1145px; min-width: 0; }
.tab { position: relative; flex: 1 1 0; min-width: 0; height: 28px; margin-right: -8px; padding: 0 18px 0 15px; display: flex; align-items: center; gap: 7px; color: #222; text-decoration: none; isolation: isolate; }
.tab::before, .tab::after { content: ""; position: absolute; inset: 0 -1px 0 0; background: #6f6f6f; clip-path: polygon(12px 0, calc(100% - 13px) 0, 100% 100%, 0 100%); z-index: -2; }
.tab::after { inset: 0 0 1px 0; background: #a4a4a4; z-index: -1; }
.tab.on::before, .tab.on::after { background: #f1f1f1; inset: 0; }
.tab .fav { color: #c9cdd0; }
.tab.on .fav { color: #fff; }
.tab .ttl { width: 13px; flex: none; overflow: hidden; font-size: 12px; white-space: nowrap; -webkit-mask-image: linear-gradient(90deg, #000 50%, transparent); mask-image: linear-gradient(90deg, #000 50%, transparent); }
.newtab { width: 32px; height: 15px; margin: 7px 0 0 10px; background: #a0a0a0; clip-path: polygon(0 0, 80% 0, 100% 100%, 20% 100%); }
.user { height: 20px; width: 48px; margin: -2px 0 0 18px; border: 1px solid #aaa; border-top: 0; border-radius: 0 0 4px 4px; background: linear-gradient(#555, #222 50%, #000); color: #fff; font-weight: 500; font-size: 11px; }

.omni { flex: none; height: 37px; background: #f1f1f1; border-bottom: 1px solid #b9b9bd; display: flex; align-items: center; padding-left: 11px; }
.nav { width: 28px; height: 28px; justify-content: flex-start; }
.nav:nth-child(3) { width: 25px; }
.url { flex: 1; height: 28px; background: #fff; border: 1px solid #adadad; border-radius: 3px; display: flex; align-items: center; padding: 0 6px 0 9px; font-size: 13px; color: #111; }
.secure { color: #0b8043; margin-left: 8px; padding-right: 10px; border-right: 1px solid #999; line-height: 16px; }
.addr { margin-left: 7px; }
.addr b { color: #0b8043; font-weight: 400; }
.addr i { color: #777; font-style: normal; }
.star { margin-left: auto; }
.ext { width: 197px; display: flex; align-items: center; justify-content: space-between; padding: 0 16px 0 10px; }
.abp { width: 17px; height: 17px; background: #c40d0d; color: #fff; font: 700 7px/17px "Liberation Sans", sans-serif; text-align: center; clip-path: polygon(30% 0, 70% 0, 100% 30%, 100% 70%, 70% 100%, 30% 100%, 0 70%, 0 30%); }
.bit { position: relative; width: 16px; height: 16px; background: #fff; color: #333; font: 700 4px/14px "Liberation Sans", sans-serif; text-align: center; }
.bit svg { position: absolute; right: -6px; bottom: -6px; }
.bb { width: 12px; height: 12px; background: #111; border-radius: 2px; color: #fff; font: 700 8px/9px "Liberation Serif", serif; display: flex; }
.bb b + b { margin-top: 3px; }

.app { position: relative; flex: 1 0 auto; display: flex; background: #1c2030; }
.tools { position: relative; width: 52px; background: #131722; display: flex; flex-direction: column; align-items: center; padding-top: 10px; color: #8592a0; }
.tools svg { fill: none; stroke: currentColor; stroke-width: 1.2; }
.tools .mask { stroke: none; margin-bottom: 10px; }
.tools .cross { stroke: #3aa6d0; }
.tools .bold { stroke-width: 4; }
.tools .chev { stroke: #15181f; stroke-width: 2; }
.group { width: 52px; display: flex; flex-direction: column; align-items: center; border-top: 1px solid #2b3040; }
.group button { height: 38px; width: 52px; }
.g1 { padding: 7px 0 5px; }
.g2 { padding: 6px 0; }
.g3 { padding: 6px 0; flex: 1; }
.more { width: 52px; height: 24px; background: #6c7d8b; }
.handle { position: absolute; right: -4px; bottom: 65px; width: 8px; height: 26px; background: #131722; border: 1px solid #2b3040; border-radius: 4px; color: #ddd; }

.center { position: relative; flex: 1; min-width: 0; padding: 0 5px; display: flex; flex-direction: column; }
.bar { position: relative; height: 40px; display: flex; align-items: flex-start; padding-top: 5px; gap: 4px; color: #8592a0; }
.btns { display: flex; height: 30px; background: #131722; border: 1px solid #363c4e; white-space: nowrap; }
.btns > * + * { border-left: 1px solid #363c4e; }
.btns .dot { border-left-style: dotted; }
.btns.right { margin-left: auto; }
.symbol { width: 99px; padding-left: 7px; font-size: 13px; font-weight: 600; color: #d8dade; }
.w20 { width: 20px; } .w21 { width: 21px; } .w26 { width: 26px; } .w30 { width: 30px; } .w34 { width: 34px; } .w37 { width: 37px; } .w38 { width: 38px; } .w40 { width: 40px; } .w42 { width: 42px; } .w46 { width: 46px; gap: 9px; } .w50 { width: 50px; } .w54 { width: 54px; } .w70 { width: 70px; } .w80 { width: 80px; }
.name { color: #e6e8ea; font-weight: 600; font-size: 11px; }
.hi, .off { background: #1c2030; }
.off { color: #4a5261; }
.lite { color: #d8dade; }
.tri { position: absolute; left: 0; bottom: 0; width: 27px; height: 5px; background: #363c4e; display: flex; align-items: center; justify-content: center; }

.chartbox { position: relative; background: #131722; border: 1px solid #363c4e; }
.chart { width: 100%; height: auto; }
.axis text { font: 11px "Liberation Sans", Arial, sans-serif; fill: #e6e6e6; stroke: #e6e6e6; stroke-width: .3px; }
.axis .dk { fill: #101828; stroke: none; }
.mark { font: 700 28px "DejaVu Sans", sans-serif; fill: #64788a; }
.legend { position: absolute; left: 5px; top: 9px; overflow: hidden; right: 472px; }
.legend.rsi { top: 334px; }
.row { display: flex; align-items: center; height: 20px; white-space: nowrap; gap: 5px; font-size: 11px; font-weight: 600; color: #dfe1e5; }
.row.big { gap: 6px; font-size: 16px; font-weight: 600; }
.ic { display: flex; gap: 3px; margin: 0 5px 0 7px; }
.big .ic { margin: 0 2px 0 3px; opacity: .8; }
.ohlc { margin-right: 3px; font-size: 15px; font-weight: 400; }
.ohlc b { font-weight: 400; color: #6cb0ec; font-size: 14px; }
.green { color: #4db37e; font-weight: 500; margin-right: 4px; font-size: 12px; } .orange { color: #f0894a; font-weight: 500; font-size: 12px; } .blue { color: #3f8bb8; font-weight: 400; font-size: 12px; } .purple { color: #7c1b96; font-weight: 400; font-size: 12px; }

.draw { position: absolute; right: 67px; top: 1px; height: 40px; display: flex; background: #1d2030; border: 1px solid #363c4e; color: #7b8b9b; box-shadow: 0 1px 4px #000; }
.draw button { width: 39px; border-left: 1px solid #363c4e; gap: 3px; }
.draw .grip, .trade .grip { width: 13px; display: flex; align-items: center; justify-content: center; }
.draw .num { color: #e6e8ea; font-size: 14px; font-weight: 600; }

.ranges { display: flex; height: 21px; align-items: center; background: #181c29; color: #7d8b99; padding-left: 2px; }
.ranges button { height: 14px; padding: 0 12px; border-right: 1px solid #363c4e; font-size: 11px; font-weight: 500; }
.ranges button:nth-of-type(10), .ranges button:last-child { border: 0; }
.time { margin-left: auto; padding-right: 13px; border-right: 1px solid #363c4e; line-height: 14px; font-size: 11px; }
.time b { font-weight: 500; font-size: 12px; }
.ranges button:last-child { margin-right: 130px; }

.bottom { flex: 1; display: flex; min-height: 30px; padding-top: 5px; color: #8d9aa8; }
.panels { display: flex; border: 1px solid #363c4e; border-bottom: 0; background: #181c29; font-size: 11px; }
.panels button { width: 105px; border-right: 1px solid #363c4e; }
.panels button:last-child { border: 0; }
.panels .wide { width: 136px; }
.share { margin-left: auto; display: flex; align-items: center; gap: 17px; color: #75879a; height: 24px; padding-right: 12px; }
.stk { font-size: 19px; font-weight: 600; }
.publish { display: flex; height: 29px; margin-top: -2px; color: #fff; font-weight: 600; }
.publish button { width: 138px; background: #2b9fd3; }
.publish .dots { width: 54px; background: #1e8dbe; }
.fold { position: absolute; right: 0; bottom: 299px; width: 6px; height: 26px; background: #363c4e; }

.chats { width: 201px; background: #181c29; border-left: 1px solid #363c4e; padding: 3px 3px 0; color: #8a94a2; }
.chead { height: 34px; background: #262b3e; display: flex; align-items: center; gap: 5px; padding: 0 3px 0 11px; }
.chead h2 { flex: 1; font-size: 13px; font-weight: 500; color: #73869a; white-space: nowrap; }
.chead button { width: 38px; height: 30px; background: #131722; border: 1px solid #363c4e; color: #8494a4; }
.chats p { margin-top: 11px; text-align: center; font-style: italic; font-size: 14px; line-height: 16px; color: #868686; }

.widgets { width: 46px; background: #131722; border-left: 1px solid #363c4e; color: #718395; }
.widgets h3 { height: 28px; line-height: 28px; font-size: 9px; font-weight: 500; color: #d8dade; text-align: center; border-bottom: 1px solid #363c4e; }
.widgets button { position: relative; width: 45px; height: 55px; border-bottom: 1px solid #363c4e; }
.widgets .on { background: #1c2030; color: #3aabe0; }
.widgets .c2 { height: 60px; }
.widgets .c3 { height: 54px; }
.badge { position: absolute; right: 1px; bottom: 10px; width: 17px; height: 16px; background: #d8705c; border: 1px solid #fff; border-radius: 2px; color: #fff; line-height: 14px; }

.trade { position: absolute; right: 26px; bottom: 34px; height: 39px; display: flex; background: #1d2030; border: 1px solid #363c4e; box-shadow: 0 1px 4px #000; }
.trade > * + * { border-left: 1px solid #363c4e; }
.trade .sell, .trade .buy { width: 100px; flex-direction: column; align-items: flex-start; padding-left: 7px; background: #342536; font-size: 14px; line-height: 16px; color: #dfe1e5; }
.trade .buy { background: #1c2f3e; }
.trade strong { font-size: 12px; font-weight: 500; color: #ef476a; }
.trade em { font-style: normal; color: #e0456a; }
.trade .buy strong { color: #36a6e0; } .trade .buy em { color: #2fa886; }
.spread { width: 94px; text-align: center; font-size: 13px; line-height: 38px; color: #777d88; }
.info { width: 36px; }
.pm { width: 19px; display: flex; flex-direction: column; }
.pm button { flex: 1; width: 18px; }
.pm button + button { border-top: 1px solid #363c4e; }

.shelf { flex: none; height: 49px; background: #f1f1f1; color: #111; display: flex; align-items: center; font-size: 12px; padding: 0 13px 0 20px; border-top: 1px solid #fff; }
.file { gap: 13px; }
.file svg:last-child { margin-left: 5px; }
.line { width: 1px; height: 36px; background: #c4c4c4; margin-left: 18px; }
.all { margin-left: auto; width: 105px; height: 28px; background: #fff; border: 1px solid #999; border-radius: 3px; }
.close { margin-left: 13px; }
```
FILE: app.js
```js
const tabs = [["tv","Gr"],["tv","W"],["tv","TH"],["cmc","Co"],["gmail","CO"],["btx","Bit"],["btx","(0."],["fb","Co"],["tg","Te"],["cc","Cr"],["gmail","Re"],["st","ht"],["st","Ne"],["gh","M"],["tg","Te"],["tw","Co"]];
document.getElementById("tablist").innerHTML = tabs.map(([icon, text], i) => {
  const on = i === 1;
  const color = icon === "tw" ? ' style="color:#1c8ed0"' : "";
  return `<a class="tab${on ? " on" : ""}" href="#" style="z-index:${on ? 50 : 30 - i}"><svg class="fav" width="16" height="16"${color}><use href="#${icon}"/></svg><span class="ttl">${text}</span><svg width="8" height="8"><path d="M0 0l8 8M8 0L0 8" stroke="#444" stroke-width="1.700"/></svg></a>`;
}).join("");

// Volume columns: one per candle, with the sessions of high turnover listed by position.
const peaks = [[78,80,0],[80,38,1],[83,24,1],[112,31,0],[115,32,0],[118,20,1],[130,18,1],[134,14,1],[153,20,1],[164,34,0],[166,16,0],[220,13,0],[247,22,0],[252,14,0],[275,27,0],[280,16,1],[290,14,1],[389,38,0],[391,24,0],[401,17,0],[405,14,1],[427,19,1],[437,12,0],[476,24,0],[479,15,0],[487,11,0],[526,54,0],[530,25,0],[533,16,1],[541,12,1],[559,12,0],[577,12,0],[594,10,1],[598,17,0],[601,12,0],[634,9,0]];
let seed = 7;
const rnd = () => (seed = (seed * 16807) % 2147483647) / 2147483647;
let out = "";
for (let x = 66; x < 669; x += 1) {
  const calm = x > 500 && x < 524 || x > 640;
  let h = (calm ? 1 : 3) + rnd() * (calm ? 3 : 6), red = rnd() < 0.5;
  const p = peaks.find(q => q[0] === x || q[0] + 1 === x);
  if (p) { h = p[1]; red = !!p[2]; }
  out += `<rect x="${x}" y="${Math.round(443 - h)}" width="1" height="${Math.round(h)}" fill="${red ? "#a84450" : "#47805f"}" opacity="${p ? 0.8 : 0.9}"/>`;
}
document.getElementById("bars").innerHTML = out;
```
